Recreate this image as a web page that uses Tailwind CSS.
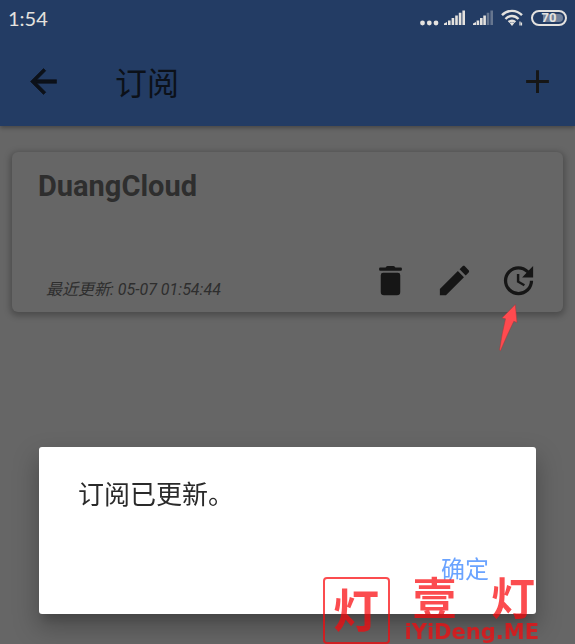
<!DOCTYPE html>
<html lang="zh-CN">
<head>
<meta charset="utf-8">
<meta name="viewport" content="width=device-width, initial-scale=1">
<title>订阅</title>
<script src="https://cdn.jsdelivr.net/npm/@tailwindcss/browser@4"></script>
</head>
<body class="min-h-screen bg-[#666666] font-['Roboto','Noto_Sans_CJK_SC',sans-serif] text-[#2e2e2e]">
<header class="bg-[#233c64] shadow-[0_2px_4px_rgba(0,0,0,0.3)]">
  <div class="flex h-9 items-center justify-between pl-2 pr-2 text-[#e4e2df]">
    <time class="font-['Lato',sans-serif] text-[20px] leading-6">1:54</time>
    <div class="flex items-center gap-2">
      <svg class="h-4 w-[45px]" viewBox="0 0 45 16" fill="currentColor" aria-hidden="true">
        <circle cx="2.5" cy="13" r="2.400"/><circle cx="9.300" cy="13" r="2.400"/><circle cx="16" cy="13" r="2.400"/>
        <path d="M24 13.500 27 12v3h-3zM28 10.500h2.600V15H28zM31.600 8h2.600v7h-2.600zM35.200 5.500h2.600V15h-2.600zM38.800 2.800h2.600V15h-2.600zM42.400.5H45V15h-2.600z"/>
      </svg>
      <svg class="h-4 w-5" viewBox="0 0 20 16" fill="currentColor" aria-hidden="true">
        <path d="M0 13.500 3 12v3H0zM3.600 10.500h2.600V15H3.600zM7 8h2.600v7H7zM10.300 5.500h2.600V15h-2.600z"/>
        <path opacity=".35" d="M13.700 2.800h2.600V15h-2.600zM17.400.5H20V15h-2.600z"/>
      </svg>
      <svg class="h-[18px] w-[22px]" viewBox="0 0 22 18" fill="none" stroke="currentColor" stroke-width="2.400" aria-hidden="true">
        <path d="M1 6.200C6.500.4 15.500.4 21 6.200M4.500 10c3.700-4 9.300-4 13 0M7.700 13.200c1.900-2 4.700-2 6.600 0"/>
        <path fill="currentColor" stroke="none" d="M8.800 14.200 11 17l2.200-2.800c-1.200-1.200-3.200-1.200-4.400 0z"/>
        <path stroke-width="1.200" d="M19 12.500v4M20.500 13.500v3"/>
      </svg>
      <div class="relative flex h-4 w-9 items-center justify-center rounded-full border-2 border-current">
        <span class="absolute inset-y-[2px] left-[10px] right-[2px] rounded-r-full bg-[#6f7f99]"></span>
        <span class="relative text-[13px] font-bold leading-3">70</span>
      </div>
    </div>
  </div>
  <div class="flex h-[90px] items-center pl-6 pr-[18px] pt-px text-[#0c1119]">
    <button type="button" aria-label="返回">
      <svg class="size-[39px]" viewBox="0 0 24 24" fill="currentColor"><path d="M20 10.900H7.900l5.500-5.500L12 4l-8 8 8 8 1.400-1.400-5.500-5.500H20z" stroke="currentColor" stroke-width=".4"/></svg>
    </button>
    <h1 class="ml-[52px] grow pt-1 text-[32px] leading-10">订阅</h1>
    <button type="button" aria-label="添加" class="text-[#161616]">
      <svg class="size-[39px]" viewBox="0 0 24 24" fill="currentColor"><path d="M19 12.900h-6.100V19h-1.800v-6.100H5v-1.800h6.100V5h1.800v6.100H19z"/></svg>
    </button>
  </div>
</header>

<main class="px-3 pt-[26px]">
  <article class="relative flex min-h-40 flex-col justify-between rounded-md bg-[#666666] pb-3 pl-[26px] pr-[25px] pt-4 shadow-[0_2px_6px_2px_rgba(0,0,0,0.26)]">
    <h2 class="text-[29px] font-bold leading-9">DuangCloud</h2>
    <div class="flex items-end justify-between">
      <p class="pl-2 text-[16px] italic leading-5">最近更新: 05-07 01:54:44</p>
      <div class="flex gap-[25px] text-[#161616]">
        <button type="button" aria-label="删除">
          <svg class="size-[39px]" viewBox="0 0 24 24" fill="currentColor"><path d="M7.500 7.200h9Q18 7.200 18 8.700V19q0 2-2 2H8q-2 0-2-2V8.700Q6 7.200 7.500 7.200zM5.600 4H9q.3-1 1.200-1h3.600q.9 0 1.200 1h3.400q.6 0 .6.600v.8q0 .6-.6.600H5.600Q5 6 5 5.400v-.8Q5 4 5.600 4z"/></svg>
        </button>
        <button type="button" aria-label="编辑">
          <svg class="size-[39px]" viewBox="0 0 24 24" fill="currentColor"><path d="M3 17.250V21h3.750L17.810 9.940l-3.750-3.750L3 17.250zM20.710 7.040c.39-.39.39-1.020 0-1.410l-2.340-2.340c-.39-.39-1.020-.39-1.410 0l-1.830 1.830 3.750 3.750 1.830-1.830z"/></svg>
        </button>
        <button type="button" aria-label="更新">
          <svg class="size-[39px]" viewBox="0 0 24 24" fill="currentColor"><path d="M21 10.120h-6.780l2.740-2.820c-2.730-2.700-7.150-2.800-9.880-.1-2.730 2.710-2.730 7.080 0 9.790s7.150 2.710 9.880 0C18.320 15.650 19 14.080 19 12.100h2c0 1.980-.88 4.550-2.640 6.290-3.510 3.480-9.210 3.480-12.720 0-3.500-3.470-3.530-9.110-.02-12.580s9.140-3.470 12.650 0L21 3v7.120zM12.500 8v4.250l3.500 2.080-.72 1.210L11 13V8h1.500z"/></svg>
        </button>
      </div>
    </div>
    <svg class="absolute -bottom-10 right-11 h-12 w-5" viewBox="0 0 20 48" aria-hidden="true">
      <path fill="#ff4a4f" stroke="#a33a3c" stroke-width=".5" d="M16.300.500 18 18.500l-3.200-1.200Q9 29 1.500 46.700L.5 46Q3 29 6.500 14.800l-3.500-.8z"/>
    </svg>
  </article>
</main>

<div class="fixed inset-0 flex items-end px-[39px] pb-[30px]">
  <section role="dialog" aria-modal="true" aria-labelledby="message" class="flex min-h-[167px] w-full flex-col justify-between rounded-[3px] bg-white px-[39px] pb-7 pt-[30px] shadow-[0_12px_24px_2px_rgba(0,0,0,0.25),0_10px_8px_-4px_rgba(0,0,0,0.12)]">
    <p id="message" class="text-[26px] leading-9 text-[#2a2a2a]">订阅已更新。</p>
    <button type="button" class="self-end px-2 text-[24px] leading-8 text-[#6aa3ff]">确定</button>
  </section>
</div>

<div class="pointer-events-none fixed bottom-0 right-9 flex items-end gap-[15px] text-[#fa080c] opacity-[0.72]">
  <div class="flex size-[67px] items-center justify-center rounded border-2 border-current text-[46px] font-bold leading-none">灯</div>
  <div class="flex flex-col">
    <div class="flex justify-between pl-2 pr-1 text-[44px] font-bold leading-10"><span>壹</span><span>灯</span></div>
    <div class="font-['DejaVu_Sans',sans-serif] text-[21px] font-bold leading-6">iYiDeng.ME</div>
  </div>
</div>
</body>
</html>
